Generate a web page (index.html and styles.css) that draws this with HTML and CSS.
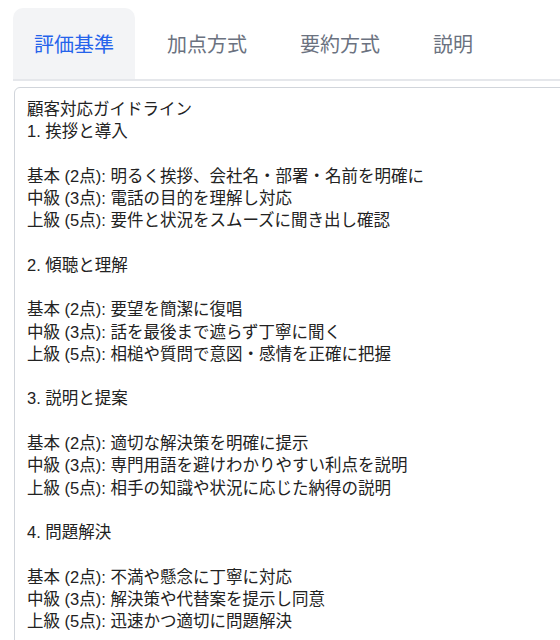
FILE: index.html
```html
<!DOCTYPE html>
<html lang="ja">
<head>
  <meta charset="UTF-8">
  <title>評価基準</title>
  <link rel="stylesheet" href="styles.css">
</head>
<body>
  <div class="page">
    <div class="tabs">
      <button class="tab active">評価基準</button>
      <button class="tab">加点方式</button>
      <button class="tab">要約方式</button>
      <button class="tab">説明</button>
    </div>

    <div class="panel">顧客対応ガイドライン
1. 挨拶と導入

基本 (2点): 明るく挨拶、会社名・部署・名前を明確に
中級 (3点): 電話の目的を理解し対応
上級 (5点): 要件と状況をスムーズに聞き出し確認

2. 傾聴と理解

基本 (2点): 要望を簡潔に復唱
中級 (3点): 話を最後まで遮らず丁寧に聞く
上級 (5点): 相槌や質問で意図・感情を正確に把握

3. 説明と提案

基本 (2点): 適切な解決策を明確に提示
中級 (3点): 専門用語を避けわかりやすい利点を説明
上級 (5点): 相手の知識や状況に応じた納得の説明

4. 問題解決

基本 (2点): 不満や懸念に丁寧に対応
中級 (3点): 解決策や代替案を提示し同意
上級 (5点): 迅速かつ適切に問題解決</div>
  </div>
</body>
</html>
```

FILE: styles.css
```css
body {
  margin: 0;
  background-color: #ffffff;
  color: #222222;
  font-family: "Liberation Sans", "Noto Sans CJK JP", sans-serif;
}
.page {
  padding: 8px 0 0 13px;
  height: 632px;
  overflow: hidden;
}
.tabs {
  display: flex;
  gap: 11px;
  border-bottom: 2px solid #e5e7eb;
}
.tab {
  height: 71px;
  padding: 0 21px;
  background: none;
  border: none;
  border-radius: 10px 10px 0 0;
  font-family: "Liberation Sans", "Noto Sans CJK JP", sans-serif;
  font-size: 20px;
  color: #6b7280;
  cursor: pointer;
}
.tab.active {
  background-color: #f3f4f6;
  color: #2563eb;
}
.panel {
  margin-top: 6px;
  margin-left: 1px;
  width: 560px;
  padding: 10px 12px 40px;
  border: 1px solid #d1d5db;
  border-radius: 6px;
  font-size: 16.5px;
  line-height: 1.35;
  white-space: pre-wrap;
}
```
